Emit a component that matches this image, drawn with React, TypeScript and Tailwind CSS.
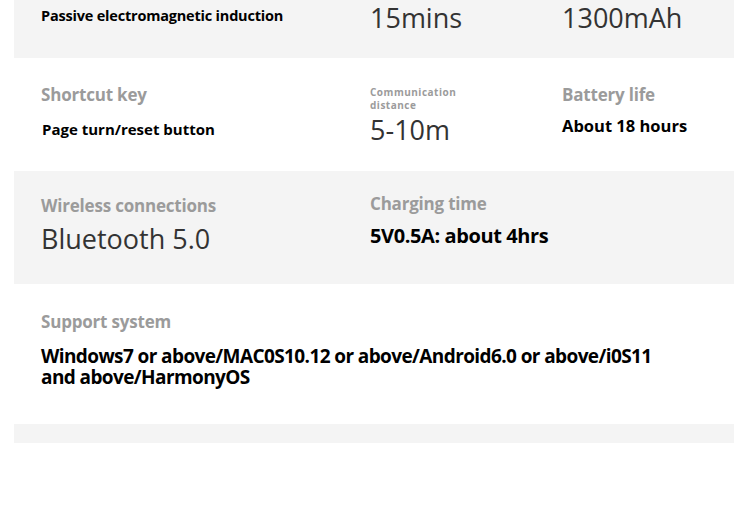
const label = "font-bold text-[#9b9b9b] text-[17px] leading-[20px] tracking-[-0.2px]"
const big = "text-[#333] text-[27px] leading-[30px] font-normal"
const strong = "font-bold text-black"

export default function App() {
  return (
    <div className="w-[750px] h-[505px] bg-white overflow-hidden" style={{ fontFamily: '"Open Sans", "Liberation Sans", sans-serif' }}>
      {/* band 1 */}
      <div className="ml-[14px] w-[720px] h-[58px] bg-[#f4f4f4] grid grid-cols-[356px_192px_1fr] items-start pt-[3px]">
        <div className={`${strong} pl-[27px] pt-[3px] text-[14.5px] leading-[20px] tracking-[-0.2px]`}>Passive electromagnetic induction</div>
        <div className={big}>15mins</div>
        <div className={big}>1300mAh</div>
      </div>

      {/* row 2 */}
      <div className="ml-[14px] w-[720px] h-[113px] grid grid-cols-[356px_192px_1fr] pt-[27px]">
        <div className="pl-[27px]">
          <div className={label}>Shortcut key</div>
          <div className={`${strong} text-[15px] leading-[20px] mt-[14px] pl-[1px]`}>Page turn/reset button</div>
        </div>
        <div>
          <div className="font-bold text-[#9b9b9b] text-[10px] leading-[13px] tracking-[0.5px] pt-[1px]">Communication<br />distance</div>
          <div className={`${big} mt-[3px]`}>5-10m</div>
        </div>
        <div>
          <div className={label}>Battery life</div>
          <div className={`${strong} text-[16.5px] leading-[20px] mt-[11px]`}>About 18 hours</div>
        </div>
      </div>

      {/* band 2 */}
      <div className="ml-[14px] w-[720px] h-[113px] bg-[#f4f4f4] grid grid-cols-[356px_1fr] pt-[25px]">
        <div className="pl-[27px]">
          <div className={label}>Wireless connections</div>
          <div className={`${big} mt-[8px]`}>Bluetooth 5.0</div>
        </div>
        <div>
          <div className={`${label} -mt-[2px]`}>Charging time</div>
          <div className={`${strong} text-[20px] leading-[24px] mt-[10px] tracking-[-0.4px]`}>5V0.5A: about 4hrs</div>
        </div>
      </div>

      {/* support system */}
      <div className="ml-[14px] w-[720px] h-[140px] pl-[27px] pt-[28px]">
        <div className={label}>Support system</div>
        <div className={`${strong} w-[630px] text-[19px] leading-[21px] mt-[14px] tracking-[-0.6px]`}>
          Windows7 or above/MAC0S10.12 or above/Android6.0 or above/i0S11 and above/HarmonyOS
        </div>
      </div>

      <div className="ml-[14px] w-[720px] h-[19px] bg-[#f4f4f4]" />
    </div>
  )
}
